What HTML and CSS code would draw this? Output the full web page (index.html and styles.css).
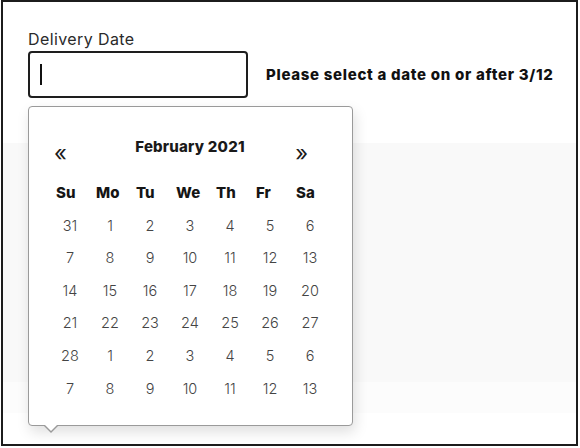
FILE: index.html
```html
<!DOCTYPE html>
<html lang="en">
<head>
    <meta charset="UTF-8">
    <title>Delivery Date</title>
    <link rel="stylesheet" href="styles.css">
</head>
<body>
    <div class="frame">
        <div class="field-row">
            <div class="field">
                <label class="label" for="date">Delivery Date</label>
                <div class="input"><span class="caret"></span></div>

                <div class="picker">
                    <div class="picker-head">
                        <span class="nav">&laquo;</span>
                        <span class="month">February 2021</span>
                        <span class="nav">&raquo;</span>
                    </div>
                    <div class="days">
                        <span class="dow">Su</span><span class="dow">Mo</span><span class="dow">Tu</span><span class="dow">We</span><span class="dow">Th</span><span class="dow">Fr</span><span class="dow">Sa</span>
                        <span>31</span><span>1</span><span>2</span><span>3</span><span>4</span><span>5</span><span>6</span>
                        <span>7</span><span>8</span><span>9</span><span>10</span><span>11</span><span>12</span><span>13</span>
                        <span>14</span><span>15</span><span>16</span><span>17</span><span>18</span><span>19</span><span>20</span>
                        <span>21</span><span>22</span><span>23</span><span>24</span><span>25</span><span>26</span><span>27</span>
                        <span>28</span><span>1</span><span>2</span><span>3</span><span>4</span><span>5</span><span>6</span>
                        <span>7</span><span>8</span><span>9</span><span>10</span><span>11</span><span>12</span><span>13</span>
                    </div>
                </div>
            </div>
            <p class="hint">Please select a date on or after 3/12</p>
        </div>
        <div class="panel">
            <div class="panel-foot"></div>
        </div>
    </div>
</body>
</html>
```

FILE: styles.css
```css
*{
    padding: 0;
    margin: 0;
    box-sizing: border-box;
}
body{
    background: #fff;
    font-family: Inter, "Open Sans", sans-serif;
    color: #222;
}
.frame{
    margin-left: 1px;
    width: 577px;
    height: 446px;
    border: 2px solid #1c1c1c;
    padding: 25px 0 0 25px;
    overflow: hidden;
}
.field-row{
    display: flex;
    align-items: flex-end;
}
.field{
    position: relative;
    width: 220px;
}
.label{
    display: block;
    font-size: 16px;
    line-height: 24px;
    letter-spacing: 0.4px;
    color: #2a2a2a;
}
.input{
    height: 47px;
    border: 2px solid #1e1e1e;
    border-radius: 4px;
    padding: 11px 0 0 10px;
}
.caret{
    display: block;
    width: 2px;
    height: 21px;
    background: #111;
}
.hint{
    margin: 0 0 14px 18px;
    font-size: 15px;
    font-weight: 800;
    letter-spacing: 0.7px;
    color: #111;
    white-space: nowrap;
}
.panel{
    display: flex;
    flex-direction: column;
    justify-content: flex-end;
    margin: 45px 0 0 -25px;
    height: 270px;
    background: #f9f9f9;
}
.panel-foot{
    height: 31px;
    background: #fcfcfc;
}

/* datepicker popup */
.picker{
    position: absolute;
    left: 0;
    top: 79px;
    width: 325px;
    height: 320px;
    background: #fff;
    border: 1px solid #9a9a9a;
    border-radius: 4px;
    box-shadow: 2px 6px 14px rgba(0, 0, 0, 0.13);
    padding: 28px 0 0 21px;
    z-index: 2;
}
.picker::after,
.picker::before{
    content: "";
    position: absolute;
    left: 14px;
    border: 8px solid transparent;
}
.picker::before{
    bottom: -16px;
    border-top-color: #9a9a9a;
}
.picker::after{
    bottom: -14px;
    border-top-color: #fff;
}
.picker-head{
    display: flex;
    align-items: flex-start;
    width: 280px;
    height: 42px;
}
.nav{
    width: 40px;
    padding-left: 4px;
    padding-top: 6px;
    font-size: 22px;
    line-height: 24px;
    color: #1a1a1a;
}
.nav:last-child{
    text-align: right;
    padding-right: 22px;
}
.month{
    flex: 1;
    text-align: center;
    font-size: 15px;
    font-weight: 800;
    line-height: 24px;
    letter-spacing: 0.2px;
    color: #1a1a1a;
}
.days{
    display: grid;
    grid-template-columns: repeat(7, 40px);
    grid-auto-rows: 32.6px;
    font-size: 14.5px;
    font-weight: 300;
    color: #444;
    text-align: center;
    line-height: 32px;
}
.days .dow{
    text-align: left;
    padding-left: 6px;
    font-weight: 800;
    color: #151515;
    font-size: 15px;
    height: 33px;
}
```
